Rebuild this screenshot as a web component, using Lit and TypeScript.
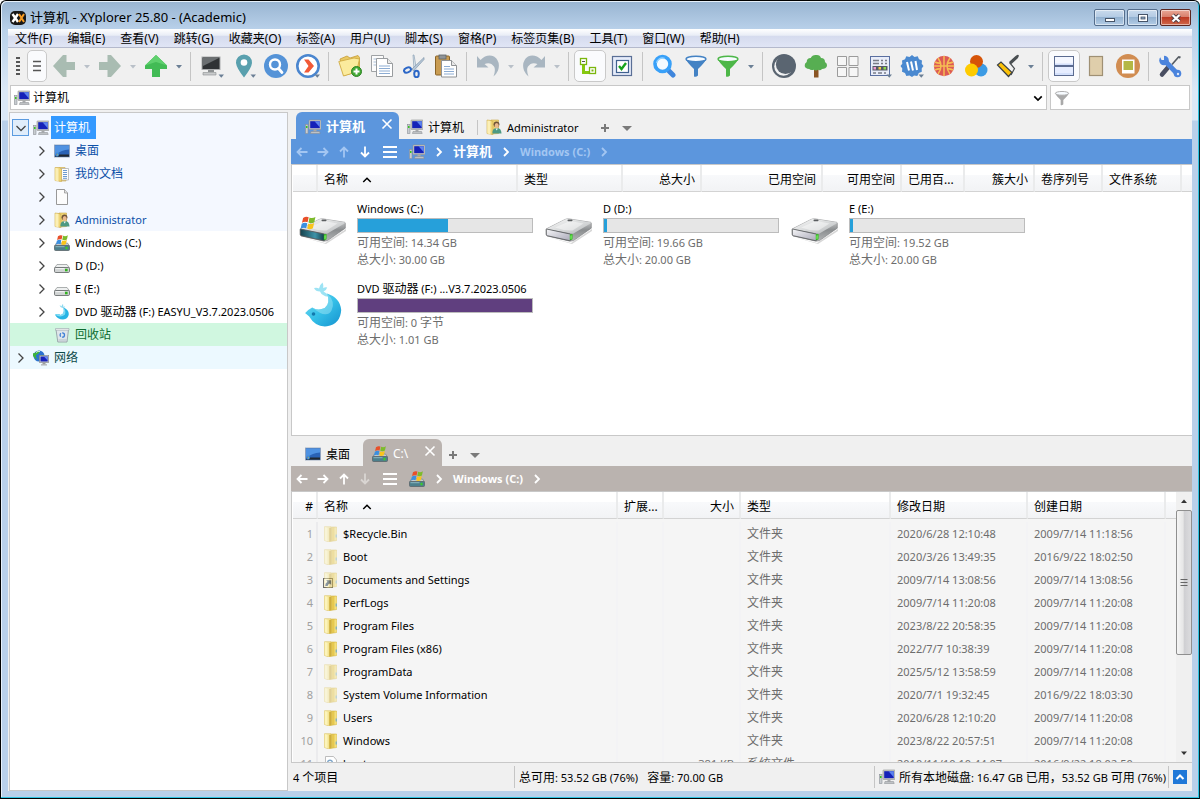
import { LitElement, html, svg, css, nothing, type TemplateResult } from "lit";
import { customElement, state } from "lit/decorators.js";
import { classMap } from "lit/directives/class-map.js";

type Shape = ReturnType<typeof svg>;

const draw = (shape: Shape, size = 16, box = size) =>
  html`<svg class="ic" width=${size} height=${size} viewBox="0 0 ${box} ${box}" aria-hidden="true">${shape}</svg>`;

/* Latin runs are set one step smaller than the Chinese text around them. */
const mix = (text: string) =>
  text.split(/([\x20-\x7e]+)/).filter(Boolean).map((run) => (/^[\x20-\x7e]/.test(run) ? html`<span class="lat">${run}</span>` : run));

/* ---------- 16px shell icons ---------- */
const winFlag = svg`
  <path d="M4 1.500q2-1.500 4-.6L7.200 4.500q-2-.8-4 .4z" fill="#e8502a"/>
  <path d="M8.600 1.100q2 .9 4.200-.4l-.8 3.700q-2 1.200-4.200.3z" fill="#7dbb2c"/>
  <path d="M3 5.500q2-1.200 4-.4l-.8 3.600q-2-.9-4 .4z" fill="#3b8fe0"/>
  <path d="M7.700 5.300q2 .9 4.200-.3L11 8.700q-2 1.200-4.100.3z" fill="#f9c41c"/>`;

const icons = {
  computer: svg`
    <rect x="0.500" y="5.500" width="2.500" height="9" fill="#c8ccd0" stroke="#8b9096" stroke-width=".6"/>
    <rect x="1" y="7" width="1.500" height="2" fill="#35c51f"/>
    <rect x="4" y="1" width="12" height="9.500" rx=".6" fill="#c9c9c2" stroke="#8f9190" stroke-width=".6"/>
    <rect x="5.200" y="2.200" width="9.600" height="7" fill="#1521b8"/>
    <path d="M9.500 2.200h5.300v6z" fill="#5c83ee"/>
    <path d="M8.500 10.600h3v2h-3z" fill="#a7a9ab"/>
    <path d="M6 12.500h8.500l.7 2H5.400z" fill="#bfc2c5" stroke="#85898d" stroke-width=".5"/>`,
  desktop: svg`
    <rect x=".5" y="2" width="15" height="12" fill="#2a62b5" stroke="#8ea0b8" stroke-width=".8"/>
    <path d="M1 2.500h14v4Q7 7 3 11H1z" fill="#4f92e2"/>
    <rect x="1" y="11.500" width="14" height="2.200" fill="#20272f"/>
    <circle cx="3" cy="11.600" r="2" fill="#3a8de0"/>
    <path d="M2 11.500l1-1v1z" fill="#e8502a"/><path d="M3.100 10.500l1 .8-1 .2z" fill="#9ad33a"/><path d="M3.100 11.800h1l-1 1z" fill="#fbd02c"/>`,
  docs: svg`
    <path d="M5.500 1.500H11l1 1.500v12H5z" fill="#f0d57a" stroke="#cda94a" stroke-width=".6"/>
    <path d="M7 2.500h7.500v11.500H7z" fill="#fdfdfb" stroke="#a7a9ab" stroke-width=".7"/>
    <path d="M9 4.500h4M9 6.500h4M9 8.500h4M9 10.500h4M9 12.300h4" stroke="#5c8fc9" stroke-width=".9"/>
    <path d="M1 1.500h4.500l2 1.500v12.500L1 14.500z" fill="#efd476" stroke="#cba748" stroke-width=".6"/>
    <path d="M1.300 1.800l3.200.6v12.800l-3.200-.7z" fill="#faeeb4"/>`,
  blank: svg`
    <path d="M2.500.5h8l3 3.500v11.500h-11z" fill="#fcfcfc" stroke="#8c8c8c" stroke-width=".9"/>
    <path d="M10.500.5v3.500h3" fill="#e2e2e2" stroke="#8c8c8c" stroke-width=".7"/>`,
  user: svg`
    <path d="M5 1h7.500v13.500L5 15z" fill="#efd476" stroke="#cba748" stroke-width=".6"/>
    <path d="M1 1l4 .5 2 1v13L1 14.500z" fill="#efd476" stroke="#cba748" stroke-width=".6"/>
    <path d="M1.300 1.400l3.200.6v13.200l-3.200-.7z" fill="#fbefb6"/>
    <circle cx="10.500" cy="5.300" r="2.900" fill="#6e5238"/>
    <ellipse cx="10.700" cy="6.500" rx="2" ry="2.500" fill="#e9b98d"/>
    <path d="M6.300 14.500q.2-4.700 3-5.200h2.800q3.200.6 3.400 5.200z" fill="#4d9a83"/>
    <path d="M9.500 9.400l1.200 2.200 1.200-2.200z" fill="#f3f6f6"/>`,
  sysdrive: svg`
    <path d="M2.500 8h11l2 3H.5z" fill="#c4cacd" stroke="#6d767a" stroke-width=".6"/>
    <g transform="translate(-.5 -.5) scale(1.120)">${winFlag}</g>
    <rect x=".5" y="10.500" width="15" height="5" rx="1" fill="#4c7f8c" stroke="#59656a" stroke-width=".8"/>
    <path d="M1.500 11.700h9" stroke="#9cc4cc" stroke-width=".8"/>
    <rect x="11.500" y="11.800" width="2" height="2.500" fill="#3bd025"/>`,
  drive: svg`
    <path d="M3 6.500h10l2.500 3.500H.5z" fill="#eef0f0" stroke="#8c9091" stroke-width=".7"/>
    <rect x=".5" y="9.500" width="15" height="5" rx="1.200" fill="#d0d3d3" stroke="#6b6f70" stroke-width=".9"/>
    <path d="M1.500 10.600h9" stroke="#f5f6f6"/>
    <rect x="11" y="10.800" width="2.600" height="2.500" fill="#31b31f"/>`,
  whale: svg`
    <path d="M5.500 1.500q2 0 2.200 1 0-1.800 1.300-2.500.5 1.500 0 2.700 1.300-.5 2.200 0-1 1.300-2.300 1.300-2.400-.4-3.400-2.500z" fill="#8fdaf0"/>
    <path d="M9.500 3.500q5.300 2 5.300 6.800-.6 4.900-5.800 5.200Q3.500 15.500 1 10.800q3-1.500 5.500.2 4.300-.6 3-7.500z" fill="#28b4e4"/>
    <path d="M1 10.800q3-1.500 5.500.2 4.300-.6 3-7.500 3 3.500 1.300 7.300Q6.500 14 1 10.800z" fill="#7edaf3"/>`,
  bin: svg`
    <path d="M2 2.500h12.500L13 15H3.800z" fill="#dfe6ea" stroke="#8b979e" stroke-width=".8"/>
    <path d="M1.500 1.500h13.500v1.700H1.500z" fill="#f3f5f6" stroke="#9aa5ab" stroke-width=".6"/>
    <circle cx="8.300" cy="8" r="2.200" fill="none" stroke="#3f7fd6" stroke-width="1.300" stroke-dasharray="3.400 1.200"/>
    <path d="M4.500 13h8" stroke="#b6c1c7"/>`,
  network: svg`
    <circle cx="6" cy="6" r="5.500" fill="#2b72cf"/>
    <path d="M2 3q3-3 5-2-1 3-3 3.500T3.500 8 1 7t1-4zM7 6q3-2 4.500 0-.5 4-3.500 5z" fill="#3db43b"/>
    <path d="M3 2.500q2-1.800 4-1" stroke="#d3f0d0" stroke-width="1" fill="none"/>
    <rect x="6.500" y="5.500" width="9.200" height="7" fill="#cfd0cc" stroke="#7e8184" stroke-width=".6"/>
    <rect x="7.500" y="6.500" width="7.200" height="5" fill="#1723bb"/><path d="M11 6.500h3.700v4z" fill="#6b8ff0"/>
    <path d="M9.500 12.500h3v2h-3z" fill="#9a9c9e"/><path d="M8 14.200h6v1.300H8z" fill="#b0b2b4"/>`,
  folder: svg`
    <path d="M7 1h6.500v13.500L7 15.500z" fill="#e6c850" stroke="#d3b548" stroke-width=".6"/>
    <path d="M11.500 1.500h2v12.700l-2 .3z" fill="#f3df7e"/>
    <path d="M1.500.7h6l1 .8v13.500l-2.500 1-4.500-1.500z" fill="#f4e493" stroke="#dcc262" stroke-width=".6"/>
    <path d="M6.200 2l2.300-.8v13.600l-2.300 1z" fill="#cfae3c"/>
    <path d="M1.800 1l2.700.8v13.400l-2.700-.9z" fill="#fcf4bc"/>
    <rect x="12.700" y="8.500" width="1" height="3" fill="#5fa5d8"/>`,
  shortcut: svg`
    <rect x=".5" y="6.500" width="9" height="9" fill="#fff" stroke="#6b6b6b"/>
    <path d="M2.200 14q-.2-3 2.300-4.300L3.200 8.300H8.200V13L6.800 11.600Q4.800 12.200 4.600 14z" fill="#173a8c"/>`,
  sysfile: svg`
    <path d="M2.500.5h8l3 3.500v11.500h-11z" fill="#fff" stroke="#b5b5b5" stroke-width=".9"/>
    <circle cx="7" cy="6.500" r="2.300" fill="none" stroke="#7fa6c9" stroke-width="1.400"/>
    <circle cx="10" cy="10.500" r="2.300" fill="none" stroke="#9aa6ad" stroke-width="1.400"/>`,
};

/* ---------- 48px drive pictures ---------- */
const bigDrive = (system: boolean) => svg`
  <defs>
    <linearGradient id="top" x1="0" y1="0" x2="1" y2="1"><stop offset="0" stop-color="#fafafa"/><stop offset=".6" stop-color="#d3d5d6"/><stop offset="1" stop-color="#b0b3b5"/></linearGradient>
    <linearGradient id="side" x1="0" y1="0" x2="0" y2="1"><stop offset="0" stop-color="#d8d9da"/><stop offset=".5" stop-color="#8a8d8f"/><stop offset="1" stop-color="#b4b6b7"/></linearGradient>
    <linearGradient id="front" x1="0" y1="0" x2="1" y2="1"><stop offset="0" stop-color="#f6f6f8"/><stop offset="1" stop-color="#a9a9b8"/></linearGradient>
    <linearGradient id="frontSys" x1="0" y1="0" x2="1" y2="0"><stop offset="0" stop-color="#16414c"/><stop offset=".6" stop-color="#3d93a8"/><stop offset="1" stop-color="#123a44"/></linearGradient>
  </defs>
  <g transform="translate(0 7)">
    <path d="M3 30l23 6 21-14v2L27 37z" fill="#000" opacity=".16"/>
    <path d="M1.200 22L20 12.500q2-.9 4-.6l21.500 3.400q1 .3.800 1.300v4.600L28.500 33.600l-3.500.6L2.200 28.900q-.9-.5-.9-1.500z" fill="url(#side)" stroke="#77797b" stroke-width=".6"/>
    <path d="M1.200 22L20 12.500q2-.9 4-.6l21.500 3.400q1 .5 0 1.300L28 26.800z" fill="url(#top)"/>
    <path d="M10 20.500L25 14l13.500 2.400-11 7.100q-8 .5-17.500-3z" fill="#fff" opacity=".45"/>
    <rect x="22.500" y="12.600" width="5" height="1.700" rx=".8" fill="#5b5e60"/>
    <path d="M1.600 22l22.900 4.900q1.500.5 1.400 2v3.500q-.2 1.500-1.700 1.200L2.200 28.700q-1-.4-.9-1.400v-4.500q0-.8.3-.8z" fill=${system ? "url(#frontSys)" : "url(#front)"} stroke="#55585a" stroke-width=".8"/>
    <path d="M24.800 27.500l2.700-.6v5.300l-2.700 1.100z" fill="#2cbf18"/><path d="M25.600 28.500l.9-.2v3.500l-.9.3z" fill="#a4f78e"/>
    ${system ? svg`<g transform="translate(-1.500 9) scale(1.400)">${winFlag}</g>` : nothing}
  </g>`;

const bigWhale = svg`
  <defs><linearGradient id="wh" x1="0" y1="0" x2="1" y2="1"><stop offset="0" stop-color="#7bdcf2"/><stop offset=".5" stop-color="#35c0e8"/><stop offset="1" stop-color="#1492cf"/></linearGradient></defs>
  <path d="M21 11.500q-4.500 0-6-3.500 3-.7 5 .5.500-3.500 3.500-6 1.500 3 .7 5.500 2.300-1.300 4-.6-1 3.200-3.700 4.200 3 2 6 4-3 2-5.500 0-3.500-2-4-4.100z" fill="#9de3f4"/>
  <path d="M28 13.500q13 4 14.200 16.500-.8 14-14.200 16.300-11.500 1.200-18-10Q6.500 33.500 6.200 33q3.300-3.700 7-5.500 5.500 3.800 12.500.6 6-4.600 2.300-14.600z" fill="url(#wh)"/>
  <path d="M28 13.500q9 8 4.500 17-5 9-19.300-3 5.500 3.800 12.500.6 6-4.600 2.300-14.600z" fill="#a9e8f6" opacity=".45"/>
  <circle cx="14.500" cy="34" r="1.800" fill="#1379ad"/>`;

/* ---------- toolbar icons, 24px ---------- */
const arrowLeft = (c: string) => svg`<path d="M1 12L11 1h3.500v7H23v8h-8.500v7H11z" fill=${c}/>`;
const funnel = (c: string) => svg`
  <path d="M2 5q10 4 20 0-.5 3-8 10v6.500q-2 2-4 1V15Q2.500 8 2 5z" fill=${c}/>
  <ellipse cx="12" cy="5" rx="10" ry="2.800" fill="#f7fbff" stroke=${c} stroke-width="1.400"/>`;
const tick = svg`<path d="M18.500 20.500h5.500l-2.700 3.200z" fill="#6b7f95"/>`;
const curl = "M1 2l3.500 4Q11-.5 18 2.500q7 5 4 14-1.500 3.500-4.500 6 2.500-7 .5-10-3.500-5-9.500-2.500l4 3.500H1z";

const tools: Record<string, Shape> = {
  back: arrowLeft("#a9bcb2"),
  forward: svg`<g transform="translate(24 0) scale(-1 1)">${arrowLeft("#a9bcb2")}</g>`,
  up: svg`<path d="M12 1L23 11.500V15h-7v8H8v-8H1v-3.500z" fill="#42bb55"/><path d="M12 1L23 11.500 12 8 1 11.500z" fill="#5fd06e"/>`,
  monitor: svg`
    <rect x="2" y="3" width="18" height="12.500" fill="#2f3235" stroke="#a9abad"/><path d="M3 4h16L3 12z" fill="#6b6f72"/>
    <path d="M8 16h6v2H8z" fill="#8d9092"/><path d="M3 18.500h13v2.500H3z" fill="#c9cbcc" stroke="#8c8f90" stroke-width=".6"/>${tick}`,
  pin: svg`<path d="M12 0.500a8 8 0 0 1 8 8.500Q19.500 14 12 23.500 4.500 14 4 9A8 8 0 0 1 12 .5z" fill="#59a0ae"/><circle cx="12" cy="8.500" r="3.300" fill="#fff"/>${tick}`,
  find: svg`<circle cx="12" cy="12" r="12" fill="#5593d7"/><circle cx="11" cy="10.500" r="5" fill="none" stroke="#fff" stroke-width="2.400"/><path d="M14.500 14.500l3.500 4" stroke="#fff" stroke-width="2.800" stroke-linecap="round"/>`,
  go: svg`<circle cx="12" cy="12" r="10.700" fill="#fff" stroke="#4b86cf" stroke-width="2.600"/><path d="M8 5.500h4.500l5.500 6.500-5.500 6.500H8l4.500-6.500z" fill="#f15a38"/>${tick}`,
  newfolder: svg`
    <path d="M2 5l7-3 3 2 8-2.500 1.500 2V17L6 21.500z" fill="#e9c963" stroke="#c69c35" stroke-width=".8"/>
    <path d="M.8 7.500L16 4l5.500 1-3 13L5.500 22z" fill="#fbeb9d" stroke="#d0aa42" stroke-width=".9"/>
    <circle cx="18.500" cy="17.500" r="5" fill="#43a835" stroke="#2d8324"/><path d="M18.500 14.500v6M15.500 17.500h6" stroke="#fff" stroke-width="2"/>`,
  copy: svg`
    <path d="M1.500 1.500h12v16h-12z" fill="#fcfcfc" stroke="#9fa2a5"/><path d="M3.500 5h8M3.500 8h8M3.500 11h8" stroke="#a9bfd9"/>
    <path d="M6.500 4.500h11l5 5V22.500h-16z" fill="#fff" stroke="#999c9f"/><path d="M17.500 4.500v5h5" fill="#e9e9e9" stroke="#999c9f"/><path d="M9 12h11M9 14.500h11M9 17h11M9 19.500h11" stroke="#8cacd3"/>`,
  cut: svg`
    <path d="M11 1l1 0 2 12-2 2z" fill="#dce6ee" stroke="#8ba0b4" stroke-width=".7"/><path d="M22 3.500v2L11.500 17l-1.500-2z" fill="#b7c8d8" stroke="#7f95aa" stroke-width=".7"/>
    <ellipse cx="5.500" cy="16" rx="3.600" ry="2.400" fill="none" stroke="#2c67c7" stroke-width="2" transform="rotate(-25 5.500 16)"/>
    <ellipse cx="14.500" cy="20" rx="2.300" ry="3.200" fill="none" stroke="#2c67c7" stroke-width="2"/>`,
  paste: svg`
    <rect x="1.500" y="2" width="14" height="19" rx="1" fill="#c99c52" stroke="#8a6428"/><rect x="5" y="1" width="7" height="4" fill="#8f9498" stroke="#5f6468" stroke-width=".8"/>
    <path d="M7.500 6.500h10l5 5V23h-15z" fill="#fff" stroke="#8f9295"/><path d="M17.500 6.500v5h5" fill="#e8e8e8" stroke="#8f9295"/><path d="M10 12.500h6M10 15h10M10 17.500h10M10 20h10" stroke="#8cacd3"/>`,
  undo: svg`<path d=${curl} fill="#a9b6c1"/>`,
  redo: svg`<path transform="translate(24 0) scale(-1 1)" d=${curl} fill="#a9b6c1"/>`,
  tree: svg`
    <path d="M5.500 9v9.500h9" stroke="#86c810" stroke-width="3" fill="none"/>
    <rect x="2.500" y="4.500" width="6" height="6" fill="#fff" stroke="#7ab60e" stroke-width="1.300"/><path d="M4 7.500h3" stroke="#555"/>
    <rect x="11.500" y="13.500" width="6" height="6" fill="#fff" stroke="#7ab60e" stroke-width="1.300"/><rect x="13.500" y="15.500" width="2" height="2" fill="#7ab60e"/>`,
  check: svg`<rect x="2.500" y="2.500" width="19" height="19" fill="#e6ecfa" stroke="#5a6f96" stroke-width="1.200"/><rect x="6.500" y="6.500" width="12" height="12" fill="#fff" stroke="#40618f" stroke-width="1.200"/><path d="M9 12l2.500 3 4.500-6" stroke="#16a31b" stroke-width="2.400" fill="none"/>`,
  magnify: svg`<path d="M16 16l5 5" stroke="#3f86dc" stroke-width="5" stroke-linecap="round"/><circle cx="10.500" cy="10" r="7.500" fill="#f4faff" stroke="#38a0f8" stroke-width="3.600"/><path d="M4.500 9a6 6 0 0 1 8-4.500" stroke="#8fd0ff" stroke-width="1.500" fill="none"/>`,
  filter: funnel("#4382c4"),
  filterGreen: funnel("#4db748"),
  moon: svg`<circle cx="12" cy="12" r="12" fill="#5a6571"/><circle cx="11.500" cy="12.500" r="9.300" fill="#f2f3f4"/><circle cx="13.500" cy="10.500" r="9.600" fill="#5a6571"/>`,
  bigtree: svg`<path d="M10 14h4.500v9.500H10z" fill="#8a5423"/><path d="M12 1q4-.5 5 3 4 0 4 4 2.500 1.500 2 4-1 3-5 3-1.500 2-4 .8-2 1.500-4.500 0-3 .7-4.300-.8-4-.5-4.500-3-.4-2.500 2-4 0-4 4-4 1.500-3.200 5.300-3z" fill="#57ae52"/>`,
  tiles: svg`<path d="M1.500 2.500h9v9h-9zM13 2.500h9v9h-9zM1.500 13.500h9v9h-9zM13 13.500h9v9h-9z" fill="#f6f6f6" stroke="#9b9b9b"/>`,
  calendar: svg`
    <rect x="2.500" y="2.500" width="19" height="19" fill="#e9edf9" stroke="#5a6fa0"/>
    <path d="M5 6.500h6M13 6.500h2M17 6.500h2M5 9.500h6M13 9.500h2M17 9.500h2M5 19h3M10 19h4M16 19h2" stroke="#7a7d88" stroke-width="1.400"/>
    <rect x="4.500" y="12" width="15" height="4.500" fill="#555a68"/>
    <rect x="5.500" y="13" width="2.500" height="2.500" fill="#f09ad0"/><rect x="10.500" y="13" width="2.500" height="2.500" fill="#f3c948"/><rect x="15.500" y="13" width="2.500" height="2.500" fill="#8bdc4a"/>${tick}`,
  badge: svg`<path d="M12 1l2.500 2 3.200-.7 1.300 3 3 1.200-.3 3.300L23.500 12l-1.800 2.500.1 3.200-3 1.300-1.500 3-3.200-.5L12 23l-2.500-1.500-3.200.5-1.300-3-3-1.300.3-3.200L.5 12l1.800-2.300L2 6.500l3-1.200 1.300-3 3.200.7z" fill="#4a89d0"/>
    <path d="M7 8l2 8.500M11 7.500l2 9M15.500 7l1.500 9" stroke="#fff" stroke-width="2" fill="none"/>${tick}`,
  ball: svg`<circle cx="12" cy="12" r="10.200" fill="#dc5a55"/><path d="M2 12h20M12 2v20M6 4q6 8 0 16M18 4q-6 8 0 16M3 8q3 1.500 5.500 1M21 8q-3 1.500-5.500 1M3 16q3-1.500 5.500-1M21 16q-3-1.500-5.500-1" stroke="#f6bd53" stroke-width="1.500" fill="none"/>`,
  colors: svg`<circle cx="17" cy="16" r="6.500" fill="#3c9be4"/><circle cx="12.500" cy="7.500" r="6.500" fill="#d65408"/><circle cx="7.500" cy="16" r="6.500" fill="#fecb00"/>`,
  brush: svg`
    <path d="M22.500 1q1 1-1 3.500l-6 5.500-2.500-2 6-5.500q2.500-2.300 3.500-1.500z" fill="#4a4f52"/>
    <path d="M13.500 8.500l5 6-3.500 6.500" stroke="#4a4f52" stroke-width="1.200" fill="none"/>
    <path d="M1.500 11L5 8 16 18.500l-3.500 4z" fill="#fbc108" stroke="#3c4145" stroke-width="1.200"/>`,
  panes: svg`<rect x="2.500" y="2.500" width="19" height="9.500" fill="#f4f7ff" stroke="#5b6b90"/><rect x="2.500" y="12" width="19" height="9.500" fill="#e6edff" stroke="#5b6b90"/><path d="M3 9.500h18v2H3zM3 19h18v2H3z" fill="#d3e0fb"/><path d="M2 12h20" stroke="#5b6b90" stroke-width="1.800"/>`,
  paper: svg`<rect x="5.500" y="2.500" width="13" height="19" fill="#dfceab" stroke="#9f9074" stroke-width="1.200"/>`,
  stamp: svg`<circle cx="12" cy="12" r="12" fill="#d18d52"/><rect x="6" y="5.500" width="12.500" height="14" fill="#fff"/><rect x="7.500" y="7" width="9.500" height="9" fill="#b4b845"/>`,
  config: svg`
    <path d="M21 2.500l-7 8" stroke="#555b62" stroke-width="1.600"/><path d="M20 3l2-1 .8 1-1 1.800z" fill="#555b62"/>
    <path d="M9.500 14L4 20.500" stroke="#4a4f62" stroke-width="4.500" stroke-linecap="round"/>
    <path d="M7 7l12 12.500" stroke="#4b84dd" stroke-width="5" stroke-linecap="round"/>
    <circle cx="6" cy="6.500" r="4.800" fill="#4b84dd"/><path d="M1 .5h5v5.500L3.500 6z" fill="#f0f0f0"/><circle cx="19.500" cy="19.500" r="3.800" fill="#4b84dd"/><circle cx="20" cy="20" r="1.200" fill="#dce8fa"/>`,
  menu: svg`<path d="M8 7.500h8M8 12h8M8 16.500h8" stroke="#555" stroke-width="1.500"/>`,
};

interface Tool { id: string; label: string; drop?: boolean; on?: boolean; }
const toolGroups: Tool[][] = [
  [
    { id: "back", label: "后退", drop: true }, { id: "forward", label: "前进", drop: true }, { id: "up", label: "向上", drop: true },
  ],
  [
    { id: "monitor", label: "驱动器" }, { id: "pin", label: "位置" }, { id: "find", label: "查找" }, { id: "go", label: "转到" },
  ],
  [
    { id: "newfolder", label: "新建文件夹" }, { id: "copy", label: "复制" }, { id: "cut", label: "剪切" }, { id: "paste", label: "粘贴" },
  ],
  [{ id: "undo", label: "撤销", drop: true }, { id: "redo", label: "重做", drop: true }],
  [{ id: "tree", label: "树", on: true }, { id: "check", label: "选择" }],
  [
    { id: "magnify", label: "搜索" }, { id: "filter", label: "过滤" }, { id: "filterGreen", label: "可视过滤", drop: true },
  ],
  [
    { id: "moon", label: "夜间模式" }, { id: "bigtree", label: "迷你树" }, { id: "tiles", label: "视图" }, { id: "calendar", label: "日期" },
    { id: "badge", label: "标记" }, { id: "ball", label: "焦点" }, { id: "colors", label: "颜色过滤" }, { id: "brush", label: "画笔", drop: true },
  ],
  [{ id: "panes", label: "双窗格", on: true }, { id: "paper", label: "预览" }, { id: "stamp", label: "浮动预览" }],
  [{ id: "config", label: "配置" }],
];

const menus = ["文件(F)", "编辑(E)", "查看(V)", "跳转(G)", "收藏夹(O)", "标签(A)", "用户(U)", "脚本(S)", "窗格(P)", "标签页集(B)", "工具(T)", "窗口(W)", "帮助(H)"];

type IconName = keyof typeof icons;
interface Node { icon: IconName; name: string; level: 0 | 1; tone: string; open?: boolean; leaf?: boolean; }
const nodes: Node[] = [
  { icon: "computer", name: "计算机", level: 0, tone: "special", open: true },
  { icon: "desktop", name: "桌面", level: 1, tone: "special" },
  { icon: "docs", name: "我的文档", level: 1, tone: "special" },
  { icon: "blank", name: "", level: 1, tone: "special" },
  { icon: "user", name: "Administrator", level: 1, tone: "special" },
  { icon: "sysdrive", name: "Windows (C:)", level: 1, tone: "" },
  { icon: "drive", name: "D (D:)", level: 1, tone: "" },
  { icon: "drive", name: "E (E:)", level: 1, tone: "" },
  { icon: "whale", name: "DVD 驱动器 (F:) EASYU_V3.7.2023.0506", level: 1, tone: "" },
  { icon: "bin", name: "回收站", level: 1, tone: "recycle", leaf: true },
  { icon: "network", name: "网络", level: 0, tone: "net" },
];

interface Drive { art: "sys" | "hdd" | "dvd"; name: string; used: number; free: string; total: string; }
const drives: Drive[] = [
  { art: "sys", name: "Windows (C:)", used: 52, free: "14.34 GB", total: "30.00 GB" },
  { art: "hdd", name: "D (D:)", used: 2, free: "19.66 GB", total: "20.00 GB" },
  { art: "hdd", name: "E (E:)", used: 2, free: "19.52 GB", total: "20.00 GB" },
  { art: "dvd", name: "DVD 驱动器 (F:) ...V3.7.2023.0506", used: 100, free: "0 字节", total: "1.01 GB" },
];

interface Entry { name: string; kind: "dim" | "link" | "dir" | "file"; size: string; type: string; modified: string; created: string; }
const dir = (name: string, kind: Entry["kind"], modified: string, created: string): Entry =>
  ({ name, kind, size: "", type: "文件夹", modified, created });
const entries: Entry[] = [
  dir("$Recycle.Bin", "dim", "2020/6/28 12:10:48", "2009/7/14 11:18:56"),
  dir("Boot", "dim", "2020/3/26 13:49:35", "2016/9/22 18:02:50"),
  dir("Documents and Settings", "link", "2009/7/14 13:08:56", "2009/7/14 13:08:56"),
  dir("PerfLogs", "dir", "2009/7/14 11:20:08", "2009/7/14 11:20:08"),
  dir("Program Files", "dir", "2023/8/22 20:58:35", "2009/7/14 11:20:08"),
  dir("Program Files (x86)", "dir", "2022/7/7 10:38:39", "2009/7/14 11:20:08"),
  dir("ProgramData", "dim", "2025/5/12 13:58:59", "2009/7/14 11:20:08"),
  dir("System Volume Information", "dim", "2020/7/1 19:32:45", "2016/9/22 18:03:30"),
  dir("Users", "dir", "2020/6/28 12:10:20", "2009/7/14 11:20:08"),
  dir("Windows", "dir", "2023/8/22 20:57:51", "2009/7/14 11:20:08"),
  { name: "bootmgr", kind: "file", size: "381 KB", type: "系统文件", modified: "2010/11/10 10:44:07", created: "2016/9/22 18:02:50" },
];

const stroke = (d: string, w: number, size: number, box = 12) =>
  draw(svg`<path d=${d} fill="none" stroke="currentColor" stroke-width=${w}/>`, size, box);
const chevron = () => stroke("M4 2l4 4-4 4", 1.8, 12);
const caret = () => draw(svg`<path d="M1 4h10L6 9z" fill="currentColor"/>`, 12);
const sortMark = () => stroke("M1.500 8.500L6 4l4.500 4.500", 1.8, 10);

@customElement("app-root")
export class AppRoot extends LitElement {
  @state() private selected = 0;

  static styles = css`
    :host {
      display: flex; flex-direction: column; box-sizing: border-box; height: 100vh; overflow: hidden;
      font: 12px/17px "Noto Sans", "Noto Sans CJK SC", sans-serif; color: #000;
      background: linear-gradient(#98b4d1, #b9d1ea 29px, #dbe8f6 90px, #dbe8f6 119px, #b9d0ea 120px);
      border: 1px solid #000; border-right-color: #06242c;
      border-radius: 6px 6px 0 0;
      box-shadow: inset -1px -1px #2fc4e2, inset 1px 1px #e6f0fa;
    }
    * { box-sizing: border-box; }
    button { font: inherit; color: inherit; background: none; border: 0; padding: 0; margin: 0; display: inline-flex; align-items: center; justify-content: center; }
    a { color: inherit; text-decoration: none; }
    .ic { display: block; flex: none; }
    .lat { font-size: 11px; white-space: pre; }

    .title { display: flex; align-items: center; height: 28px; padding: 5px 8px 0 9px; gap: 4px; flex: none; }
    .title h1 { flex: 1; margin: 0; font: inherit; font-size: 13px; }
    .caps { display: flex; gap: 2px; align-self: flex-start; padding-top: 3px; }
    .cap { width: 31px; height: 17px; border: 1px solid #546d8c; border-radius: 2px; background: linear-gradient(#c9daec, #b4cbe4 45%, #93b2d1 50%, #b4cde6); box-shadow: inset 0 0 0 1px #ffffff80; }
    .cap.x { border-color: #5b2620; background: linear-gradient(#e9a896, #d9806c 45%, #bd3a22 50%, #d0694c); }

    .client { flex: 1; min-height: 0; display: flex; flex-direction: column; margin: 0 7px 7px 7px; background: #f0f0f0; }
    .menu { display: flex; flex: none; height: 19px; background: linear-gradient(#fff, #e9edf6 35%, #d5dbee 40%, #e0e5f5); border-bottom: 1px solid #b4b9cc; }
    .menu button { padding: 2px 8px 0 7px; white-space: nowrap; line-height: 18px; }

    .toolbar { display: flex; align-items: center; flex: none; height: 37px; padding: 0 0 1px 8px; }
    .grip { width: 4px; height: 18px; background: repeating-linear-gradient(#555 0 2px, #f0f0f0 2px 4px); }
    .group { display: flex; align-items: center; }
    .group + .group::before { content: ""; width: 1px; height: 29px; background: #c5c5c5; margin: 0 5px 0 4px; }
    .tool { width: 32px; height: 32px; border: 1px solid transparent; border-radius: 5px; }
    .tool.on { background: #fafbfd; border-color: #c9c9c9; }
    .tool.first { width: 20px; margin: 0 1px 0 7px; }
    .first .ic { margin: 0 -3px; }
    .drop { width: 14px; color: #6b7f95; }
    .drop.off { color: #b9c0c8; }

    .address { display: flex; gap: 3px; flex: none; height: 25px; padding: 0 2px; }
    .address label { display: flex; align-items: center; background: #fff; border: 1px solid #c8c8c8; gap: 3px; }
    .path { flex: 1; padding: 0 3px; }
    .path input { flex: 1; }
    .quick { width: 140px; padding: 0 3px; }
    .quick input { width: 100px; }
    input { font: inherit; border: 0; padding: 0; outline: 0; background: none; min-width: 0; color: #000; }

    .main { flex: 1; min-height: 0; display: flex; gap: 3px; padding: 2px 0 0 1px; }
    .tree { width: 279px; flex: none; background: #fff; border: 1px solid #c8c8c8; }
    .tree ul { list-style: none; margin: 0; padding: 0; border-top: 3px solid #f4f8ff; }
    .node { display: flex; align-items: center; height: 23px; padding-left: 2px; gap: 4px; white-space: nowrap; }
    .node.sub { padding-left: 23px; }
    .node a { padding: 0 6px 0 3px; line-height: 23px; margin-left: -2px; }
    .special { background: #f4f8ff; color: #0c50a8; }
    .recycle { background: #d0f7e0; color: #0d6b2f; }
    .net { background: #ecf9ff; color: #0d4a4a; }
    .selected a { background: #3399ff; color: #fff; }
    .toggle { width: 17px; height: 17px; flex: none; color: #444; }
    .toggle.open { background: #e0edfb; border: 1px solid #5b9be0; }

    .right { flex: 1; min-width: 0; display: flex; flex-direction: column; }
    .pane { min-height: 0; display: flex; flex-direction: column; }
    .upper { flex: 324 1 0; --accent: #5c96dd; --faint: #a3c6f2; }
    .lower { flex: 327 1 0; --accent: #bab3af; --faint: #d9d5d2; }
    .tabs { display: flex; align-items: flex-end; height: 27px; flex: none; padding-left: 5px; }
    .lower .tabs { height: 30px; padding-left: 6px; }
    .tab { height: 24px; display: flex; align-items: center; gap: 5px; padding: 0 8px; white-space: nowrap; }
    .tab.active { height: 27px; background: var(--accent); color: #fff; border-radius: 6px 6px 0 0; padding: 2px 6px 0 9px; }
    .tab.active .close { margin-left: 11px; align-self: flex-start; padding-top: 4px; }
    .tab + .tab.active { margin-left: 5px; }
    .tab:not(.active) + .add { margin-left: 7px; }
    .bold { font-weight: 700; font-size: 13px; }
    .split { width: 1px; height: 15px; background: #c5c5c5; margin: 0 0 4px 5px; }
    .add { width: 22px; height: 22px; color: #7a7a7a; }
    .bar { display: flex; align-items: center; flex: none; height: 25px; background: var(--accent); color: #fff; }
    .nav { width: 21px; height: 25px; }
    .nav.off, .faint { color: var(--faint); }
    .burger { width: 29px; height: 25px; margin-right: 5px; }
    .bar .sep { width: 28px; display: flex; justify-content: center; }
    .sheet { flex: 1; min-height: 0; display: flex; flex-direction: column; background: #fff; border: 1px solid #c8c8c8; border-width: 1px 0 1px 1px; }

    .heads { display: flex; flex: none; height: 27px; padding-left: 1px; overflow: hidden; }
    .head { height: 27px; border-right: 2px solid #eaebec; border-bottom: 1px solid #d3d3d3; padding: 3px 5px 0 6px; justify-content: flex-start; gap: 14px; flex: none; white-space: nowrap; background: linear-gradient(#fff 38%, #f8f9fb 40%, #f2f3f5); }
    .head.num { justify-content: flex-end; }
    .head.last { flex: 1; border-right: 0; min-width: 0; padding: 0; }

    .tiles { display: grid; grid-template-columns: repeat(auto-fill, 246px); row-gap: 12px; padding: 8px 0 0 7px; }
    .tile { display: flex; gap: 10px; height: 68px; }
    .facts { width: 176px; color: #6d6d6d; white-space: nowrap; }
    .facts strong { display: block; font-weight: 400; color: #000; margin-bottom: 1px; }
    .meter { height: 15px; border: 1px solid #bcbcbc; background: #e6e6e6; margin-bottom: 1px; }
    .fill { height: 100%; background: #26a0da; }
    .fill.full { background: #603f7f; }

    .listing { flex: 1; min-height: 0; display: flex; padding-left: 1px; }
    .rows { flex: 1; min-width: 0; overflow: hidden; background: #f5f5f5; }
    table { width: 100%; border-collapse: separate; border-spacing: 0; table-layout: fixed; }
    th { height: 27px; padding: 3px 5px 0 6px; font-weight: 400; text-align: left; border-right: 2px solid #eaebec; border-bottom: 1px solid #d3d3d3; background: linear-gradient(#fff 38%, #f8f9fb 40%, #f2f3f5); white-space: nowrap; }
    th:last-child { border-right: 0; }
    th.num, td.num { text-align: right; padding-left: 0; }
    th .sorted { display: flex; align-items: center; gap: 14px; }
    td { height: 23px; padding: 0 5px 0 6px; color: #6d6d6d; white-space: nowrap; border-right: 2px solid #f3f3f5; }
    td:last-child { border: 0; }
    td.idx, th.idx { text-align: right; padding-left: 0; padding-right: 3px; }
    td.idx { color: #a0a0a0; border-right-color: #ebebed; }
    tbody::before { content: ""; display: block; height: 3px; }
    .file { display: flex; align-items: center; gap: 4px; color: #000; }
    .pic { display: grid; margin-left: -1px; }
    .pic .ic { grid-area: 1 / 1; }
    .dim .ic, .link .ic:first-child { opacity: .5; }
    .c-idx { width: 25px; } .c-name { width: 300px; } .c-ext { width: 46px; } .c-size { width: 77px; } .c-type { width: 150px; } .c-date { width: 137px; } .c-made { width: 138px; }

    .scroll { width: 16px; flex: none; display: flex; flex-direction: column; background: #f0f0f0; color: #333; }
    .scroll button { height: 18px; flex: none; }
    .track { flex: 1; }
    .thumb { height: 62%; border: 1px solid #8f8f8f; border-radius: 2px; background: linear-gradient(90deg, #f5f5f5, #e6e6e6 45%, #cfcfd2 50%, #dcdcde); display: flex; align-items: center; justify-content: center; }

    .status { display: flex; flex: none; height: 28px; align-items: center; padding-right: 5px; white-space: nowrap; }
    .status div { display: flex; align-items: center; height: 22px; padding: 0 2px; }
    .status div + div { border-left: 1px solid #c5c5c5; padding-left: 4px; }
    .count { width: 223px; }
    .sum { flex: 1; gap: 9px; }
    .local { gap: 4px; }
    .status div.more { padding-right: 0; }
    .expand { width: 14px; height: 14px; background: #1f78d8; color: #fff; }
  `;

  private tool(t: Tool): TemplateResult {
    return html`<button class=${classMap({ tool: true, on: !!t.on })} aria-label=${t.label}>${draw(tools[t.id], 24)}</button>${t.drop
      ? html`<button class=${classMap({ drop: true, off: ["back", "forward", "undo", "redo"].includes(t.id) })} aria-label="${t.label}列表">${draw(svg`<path d="M3 5h6L6 8.500z" fill="currentColor"/>`, 12)}</button>`
      : nothing}`;
  }

  private node(n: Node, i: number): TemplateResult {
    return html`<li class="node ${n.tone} ${n.level ? "sub" : ""} ${i === this.selected ? "selected" : ""}">
      <button class=${classMap({ toggle: true, open: !!n.open })} aria-label="展开">
        ${n.leaf ? nothing : n.open ? stroke("M1.500 4l4.500 4.500L10.500 4", 1.3, 12) : stroke("M3.500 1.500L8 6l-4.500 4.500", 1.3, 12)}
      </button>
      ${draw(icons[n.icon])}
      <a href="#" @click=${(e: Event) => { e.preventDefault(); this.selected = i; }}>${mix(n.name)}</a>
    </li>`;
  }

  private arrows(off: number[]): TemplateResult[] {
    const paths: [string, string][] = [
      ["后退", "M11.500 6H1.500M5.500 2L1.500 6l4 4"], ["前进", "M.5 6h10M6.500 2l4 4-4 4"],
      ["向上", "M6 11.500V1.500M2 5.500l4-4 4 4"], ["向下", "M6 .5v10M2 6.500l4 4 4-4"],
    ];
    return paths.map(([label, d], i) => html`<button class=${classMap({ nav: true, off: off.includes(i) })} aria-label=${label}>${stroke(d, 1.8, 12)}</button>`);
  }

  private closeTab = () => html`<button class="close" aria-label="关闭标签页">${stroke("M1.500 1.500l9 9M10.500 1.500l-9 9", 1.6, 12)}</button>`;
  private tabTail = () => html`
    <button class="add" aria-label="新标签页">${stroke("M6 2v8M2 6h8", 2, 12)}</button>
    <button class="add" aria-label="标签页列表">${caret()}</button>`;
  private burger = () => html`<button class="burger" aria-label="菜单">${stroke("M0 2h14M0 7h14M0 12h14", 2, 14, 14)}</button>`;

  render() {
    const heads: [string, number, boolean][] = [
      ["", 25, false], ["名称", 200, false], ["类型", 105, false], ["总大小", 79, true], ["已用空间", 121, true], ["可用空间", 79, true],
      ["已用百...", 63, false], ["簇大小", 70, true], ["卷序列号", 68, false], ["文件系统", 79, false],
    ];
    return html`
      <header class="title">
        ${draw(svg`<rect y="1" width="16" height="14" rx="5" fill="#181818"/><path d="M2.500 4l5.500 8M8 4l-5.500 8" stroke="#fff" stroke-width="2.400"/><path d="M9 4l2.500 4-2.500 4M14 4l-2.500 4 2.500 4" stroke="#f59a23" stroke-width="2" fill="none"/>`)}
        <h1>计算机 - XYplorer 25.80 - (Academic)</h1>
        <div class="caps">
          <button class="cap" aria-label="最小化">${draw(svg`<rect x="1.500" y="6.500" width="9" height="3" fill="#fff" stroke="#465468"/>`, 12)}</button>
          <button class="cap" aria-label="最大化">${draw(svg`<rect x="1.500" y="2.500" width="9" height="7" fill="#fff" stroke="#465468"/><rect x="4" y="5" width="4" height="2" fill="#8fa8c4" stroke="#465468" stroke-width=".8"/>`, 12)}</button>
          <button class="cap x" aria-label="关闭">${draw(svg`<path d="M2.500 3l7 6.500M9.500 3l-7 6.500" stroke="#4b3a40" stroke-width="4"/><path d="M2.500 3l7 6.500M9.500 3l-7 6.500" stroke="#fff" stroke-width="2.300"/>`, 12)}</button>
        </div>
      </header>
      <div class="client">
        <nav class="menu">${menus.map((m) => html`<button>${m}</button>`)}</nav>
        <div class="toolbar" role="toolbar">
          <span class="grip"></span>
          <button class="tool on first" aria-label="菜单">${draw(tools.menu, 24)}</button>
          ${toolGroups.map((g) => html`<div class="group">${g.map((t) => this.tool(t))}</div>`)}
        </div>
        <div class="address">
          <label class="path">${draw(icons.computer)}<input aria-label="地址" .value=${"计算机"} />
            ${stroke("M1.500 4l4.500 4.500L10.500 4", 2, 10)}</label>
          <label class="quick">${draw(funnel("#a9a9a9"), 16, 24)}<input aria-label="过滤" /></label>
        </div>
        <div class="main">
          <aside class="tree"><ul>${nodes.map((n, i) => this.node(n, i))}</ul></aside>
          <div class="right">
            <section class="pane upper">
              <div class="tabs">
                <div class="tab active bold">${draw(icons.computer)}<span>计算机</span>${this.closeTab()}</div>
                <div class="tab">${draw(icons.computer)}<span>计算机</span></div>
                <span class="split"></span>
                <div class="tab">${draw(icons.user)}<span>${mix("Administrator")}</span></div>
                ${this.tabTail()}
              </div>
              <div class="bar">
                ${this.arrows([0, 1, 2])}${this.burger()}${draw(icons.computer)}
                <span class="sep">${chevron()}</span><a class="bold" href="#">计算机</a>
                <span class="sep">${chevron()}</span><a class="bold faint" href="#">${mix("Windows (C:)")}</a>
                <span class="sep faint">${chevron()}</span>
              </div>
              <div class="sheet">
                <div class="heads">
                  ${heads.map(([name, width, num]) => html`<button class=${classMap({ head: true, num })} style="width:${width}px">${name}${name === "名称" ? sortMark() : nothing}</button>`)}
                  <span class="head last"></span>
                </div>
                <div class="tiles">
                  ${drives.map((d) => html`<div class="tile">
                    ${draw(d.art === "dvd" ? bigWhale : bigDrive(d.art === "sys"), 48)}
                    <div class="facts">
                      <strong>${mix(d.name)}</strong>
                      <div class="meter"><div class=${classMap({ fill: true, full: d.used === 100 })} style="width:${d.used}%"></div></div>
                      <div>${mix(`可用空间: ${d.free}`)}</div>
                      <div>${mix(`总大小: ${d.total}`)}</div>
                    </div>
                  </div>`)}
                </div>
              </div>
            </section>
            <section class="pane lower">
              <div class="tabs">
                <div class="tab">${draw(icons.desktop)}<span>桌面</span></div>
                <div class="tab active">${draw(icons.sysdrive)}<span>C:\\</span>${this.closeTab()}</div>
                ${this.tabTail()}
              </div>
              <div class="bar">
                ${this.arrows([3])}${this.burger()}${draw(icons.sysdrive)}
                <span class="sep">${chevron()}</span><a class="bold" href="#">${mix("Windows (C:)")}</a>
                <span class="sep">${chevron()}</span>
              </div>
              <div class="sheet">
                <div class="listing">
                  <div class="rows">
                    <table>
                      <colgroup><col class="c-idx" /><col class="c-name" /><col class="c-ext" /><col class="c-size" /><col class="c-type" /><col class="c-date" /><col class="c-made" /><col /></colgroup>
                      <thead><tr>
                        <th class="idx">#</th><th><span class="sorted">名称${sortMark()}</span></th><th>扩展...</th><th class="num">大小</th>
                        <th>类型</th><th>修改日期</th><th>创建日期</th><th></th>
                      </tr></thead>
                      <tbody>
                        ${entries.map((e, i) => html`<tr>
                          <td class="idx">${mix(String(i + 1))}</td>
                          <td><span class="file"><span class="pic ${e.kind}">${draw(e.kind === "file" ? icons.sysfile : icons.folder)}${e.kind === "link" ? draw(icons.shortcut) : nothing}</span>${mix(e.name)}</span></td>
                          <td></td><td class="num">${mix(e.size)}</td><td>${e.type}</td><td>${mix(e.modified)}</td><td>${mix(e.created)}</td><td></td>
                        </tr>`)}
                      </tbody>
                    </table>
                  </div>
                  <div class="scroll">
                    <button aria-label="向上滚动">${draw(svg`<path d="M3 8l3-3.500L9 8z" fill="currentColor"/>`, 12)}</button>
                    <div class="track"><div class="thumb">${draw(svg`<path d="M2.500 2.500h7M2.500 5.500h7M2.500 8.500h7" stroke="#666"/>`, 12)}</div></div>
                    <button aria-label="向下滚动">${draw(svg`<path d="M3 4.500h6L6 8z" fill="currentColor"/>`, 12)}</button>
                  </div>
                </div>
              </div>
            </section>
            <footer class="status">
              <div class="count"><span>${mix("4 个项目")}</span></div>
              <div class="sum"><span>${mix("总可用: 53.52 GB (76%)")}</span><span>${mix("容量: 70.00 GB")}</span></div>
              <div class="local">${draw(icons.computer)}<span>${mix("所有本地磁盘: 16.47 GB 已用，53.52 GB 可用 (76%)")}</span></div>
              <div class="more"><button class="expand" aria-label="展开">${stroke("M2.500 8L6 4.500 9.500 8", 2, 12)}</button></div>
            </footer>
          </div>
        </div>
      </div>`;
  }
}
